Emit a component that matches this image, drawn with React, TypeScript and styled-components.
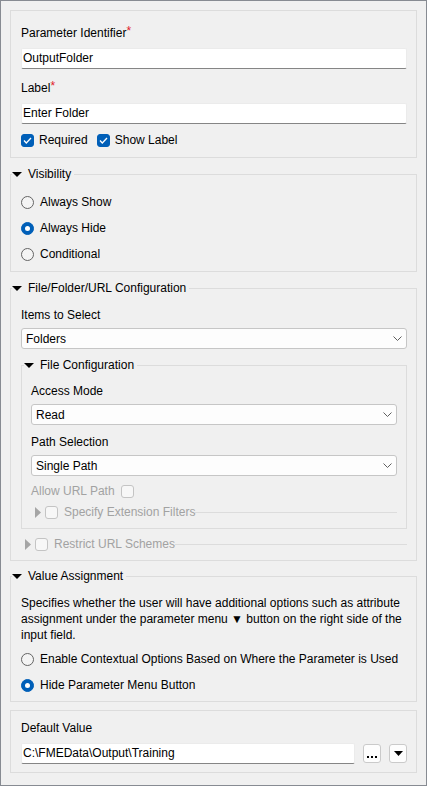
import React from "react";
import styled, { createGlobalStyle } from "styled-components";

const GlobalStyle = createGlobalStyle`
    html, body {
        margin: 0;
        padding: 0;
        background: #f0f0f0;
    }
    body {
        font-family: "Liberation Sans", "Noto Sans", sans-serif;
        font-size: 12px;
        color: #000;
    }
`;

const Window = styled.div`
    box-sizing: border-box;
    width: 427px;
    height: 786px;
    border: 1px solid #878b92;
    background: #f0f0f0;
    padding: 9px;
    display: flex;
    flex-direction: column;
`;

const Panel = styled.div<{ top: number; bottom: number; space?: number }>`
    border: 1px solid #dcdcdc;
    margin-top: ${p => p.space ?? 0}px;
    padding: ${p => p.top}px 9px ${p => p.bottom}px 10px;
    display: flex;
    flex-direction: column;
`;

const Group = styled.fieldset<{ top: number; bottom: number; space?: number }>`
    margin: ${p => p.space ?? 0}px 0 0 0;
    min-width: 0;
    border: 1px solid #dcdcdc;
    padding: ${p => p.top}px 9px ${p => p.bottom}px 10px;
    display: flex;
    flex-direction: column;
`;

const SubGroup = styled(Group)`
    padding-left: 9px;
`;

const Legend = styled.legend<{ shift?: number }>`
    display: flex;
    align-items: center;
    gap: 6px;
    height: 16px;
    line-height: 16px;
    padding: 0 3px 0 0;
    margin-left: ${p => p.shift ?? -9}px;
`;

const Caret = styled.svg`
    width: 10px;
    height: 5px;
    flex: none;
`;

const SideCaret = styled.svg`
    width: 6px;
    height: 11px;
    flex: none;
`;

const FieldLabel = styled.div<{ space?: number; below?: number }>`
    line-height: 16px;
    height: 16px;
    margin-top: ${p => p.space ?? 0}px;
    margin-bottom: ${p => p.below ?? 5}px;
`;

const Star = styled.span`
    color: #e0202a;
    font-size: 12px;
    vertical-align: top;
    line-height: 12px;
`;

const TextInput = styled.div`
    box-sizing: border-box;
    height: 21px;
    background: #fff;
    border: 1px solid #ebebeb;
    border-bottom-color: #858585;
    border-radius: 2px;
    padding: 0 1px;
    line-height: 19px;
    white-space: nowrap;
    overflow: hidden;
    flex: 1;
`;

const SelectBox = styled.div`
    box-sizing: border-box;
    height: 21px;
    background: #fdfdfd;
    border: 1px solid #c6c6c6;
    border-radius: 3px;
    padding: 0 4px;
    display: flex;
    align-items: center;
    justify-content: space-between;
`;

const Chevron = styled.svg`
    width: 9px;
    height: 5px;
`;

const Row = styled.div<{ space?: number; gap?: number; indent?: number }>`
    display: flex;
    align-items: center;
    gap: ${p => p.gap ?? 6}px;
    line-height: 16px;
    height: 16px;
    margin-top: ${p => p.space ?? 0}px;
    padding-left: ${p => p.indent ?? 0}px;
`;

const Option = styled.label<{ disabled?: boolean; gap?: number }>`
    display: flex;
    align-items: center;
    gap: ${p => p.gap ?? 5}px;
    white-space: nowrap;
    color: ${p => (p.disabled ? "#a2a2a2" : "#000")};
`;

const Box = styled.span<{ checked?: boolean }>`
    box-sizing: border-box;
    width: 13px;
    height: 13px;
    border-radius: 3px;
    flex: none;
    display: flex;
    align-items: center;
    justify-content: center;
    background: ${p => (p.checked ? "#005fb8" : "#f7f7f7")};
    border: 1px solid ${p => (p.checked ? "#005fb8" : "#c4c4c4")};
`;

const Radio = styled.span<{ checked?: boolean }>`
    box-sizing: border-box;
    width: 13px;
    height: 13px;
    border-radius: 50%;
    flex: none;
    display: flex;
    align-items: center;
    justify-content: center;
    background: ${p => (p.checked ? "#005fb8" : "#f4f4f4")};
    border: 1px solid ${p => (p.checked ? "#005fb8" : "#646464")};

    &::after {
        content: "";
        display: ${p => (p.checked ? "block" : "none")};
        width: 5px;
        height: 5px;
        border-radius: 50%;
        background: #fff;
    }
`;

const Rule = styled.div`
    flex: 1;
    height: 0;
    border-top: 1px solid #dcdcdc;
    margin-left: -4px;
`;

const Description = styled.p`
    margin: 0;
    line-height: 16px;
`;

const ToolButton = styled.div<{ low?: boolean }>`
    box-sizing: border-box;
    width: 18px;
    height: 19px;
    flex: none;
    background: #fdfdfd;
    border: 1px solid #cacaca;
    border-radius: 3px;
    display: flex;
    align-items: ${p => (p.low ? "flex-end" : "center")};
    justify-content: center;
    padding-bottom: ${p => (p.low ? 4 : 0)}px;
`;

const InputLine = styled.div`
    display: flex;
    align-items: center;
    gap: 8px;
`;

const DownCaret = () => (
    <Caret viewBox="0 0 10 5"><polygon points="0,0 10,0 5,5" fill="#000" /></Caret>
);

const RightCaret = () => (
    <SideCaret viewBox="0 0 6 11"><polygon points="0,0 6,5.5 0,11" fill="#a5a5a5" /></SideCaret>
);

const ChevronDown = () => (
    <Chevron viewBox="0 0 9 5"><polyline points="0.5,0.5 4.5,4.5 8.5,0.5" fill="none" stroke="#5f5f5f" strokeWidth="1" /></Chevron>
);

const Check = ({ checked }: { checked?: boolean }) => (
    <Box checked={checked}>
        {checked && (
            <svg width="9" height="7" viewBox="0 0 9 7">
                <polyline points="1,3.5 3.3,6 8,1" fill="none" stroke="#fff" strokeWidth="1.3" />
            </svg>
        )}
    </Box>
);

const Select = ({ value }: { value: string }) => (
    <SelectBox>
        <span>{value}</span>
        <ChevronDown />
    </SelectBox>
);

const App: React.FC = () => {
    return (
        <>
            <GlobalStyle />
            <Window>
                <Panel top={14} bottom={9}>
                    <FieldLabel below={7}>Parameter Identifier<Star>*</Star></FieldLabel>
                    <TextInput>OutputFolder</TextInput>
                    <FieldLabel space={11} below={7}>Label<Star>*</Star></FieldLabel>
                    <TextInput>Enter Folder</TextInput>
                    <Row space={8} gap={9}>
                        <Option><Check checked />Required</Option>
                        <Option><Check checked />Show Label</Option>
                    </Row>
                </Panel>

                <Group space={8} top={12} bottom={9}>
                    <Legend><DownCaret />Visibility</Legend>
                    <Row><Option gap={6}><Radio />Always Show</Option></Row>
                    <Row space={10}><Option gap={6}><Radio checked />Always Hide</Option></Row>
                    <Row space={10}><Option gap={6}><Radio />Conditional</Option></Row>
                </Group>

                <Group space={8} top={11} bottom={8}>
                    <Legend><DownCaret />File/Folder/URL Configuration</Legend>
                    <FieldLabel>Items to Select</FieldLabel>
                    <Select value="Folders" />

                    <SubGroup space={8} top={10} bottom={8}>
                        <Legend shift={-7}><DownCaret />File Configuration</Legend>
                        <FieldLabel>Access Mode</FieldLabel>
                        <Select value="Read" />
                        <FieldLabel space={9}>Path Selection</FieldLabel>
                        <Select value="Single Path" />
                        <Row space={7}>
                            <Option disabled gap={6}>Allow URL Path<Check /></Option>
                        </Row>
                        <Row space={5} gap={4} indent={4}>
                            <RightCaret />
                            <Option disabled gap={6}><Check />Specify Extension Filters</Option>
                            <Rule />
                        </Row>
                    </SubGroup>

                    <Row space={7} gap={4} indent={4}>
                        <RightCaret />
                        <Option disabled gap={6}><Check />Restrict URL Schemes</Option>
                        <Rule />
                    </Row>
                </Group>

                <Group space={7} top={11} bottom={8}>
                    <Legend><DownCaret />Value Assignment</Legend>
                    <Description>
                        Specifies whether the user will have additional options such as attribute
                        assignment under the parameter menu ▼ button on the right side of the
                        input field.
                    </Description>
                    <Row space={8}><Option gap={6}><Radio />Enable Contextual Options Based on Where the Parameter is Used</Option></Row>
                    <Row space={10}><Option gap={6}><Radio checked />Hide Parameter Menu Button</Option></Row>
                </Group>

                <Panel space={8} top={9} bottom={8}>
                    <FieldLabel below={7}>Default Value</FieldLabel>
                    <InputLine>
                        <TextInput>C:\FMEData\Output\Training</TextInput>
                        <ToolButton low>
                            <svg width="10" height="2" viewBox="0 0 10 2">
                                <rect x="0" y="0" width="2" height="2" fill="#000" />
                                <rect x="4" y="0" width="2" height="2" fill="#000" />
                                <rect x="8" y="0" width="2" height="2" fill="#000" />
                            </svg>
                        </ToolButton>
                        <ToolButton>
                            <svg width="9" height="5" viewBox="0 0 9 5"><polygon points="0,0 9,0 4.5,5" fill="#000" /></svg>
                        </ToolButton>
                    </InputLine>
                </Panel>
            </Window>
        </>
    );
};

export default App;
